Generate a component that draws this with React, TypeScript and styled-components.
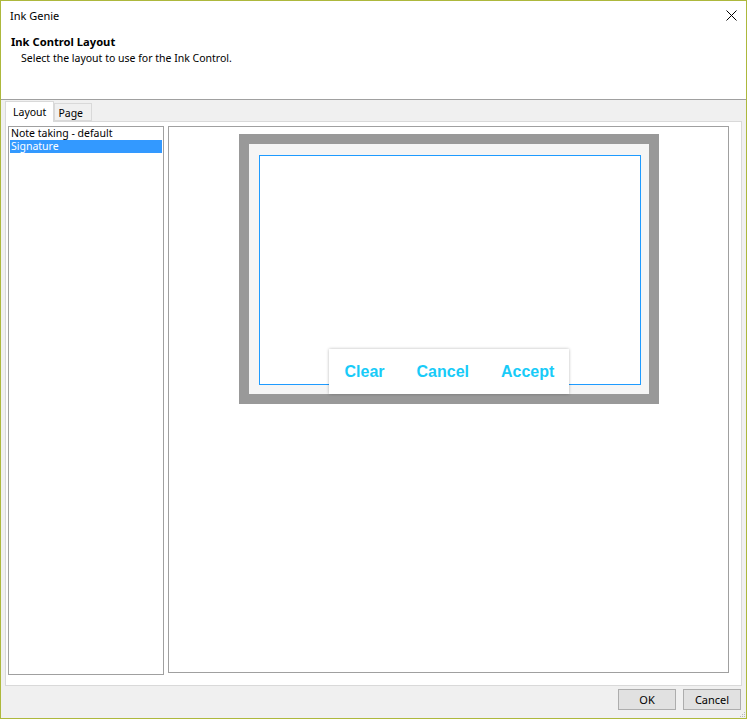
import styled, { createGlobalStyle } from 'styled-components'

const GlobalStyle = createGlobalStyle`
  html, body {
    margin: 0;
    padding: 0;
    background: #ffffff;
  }
  body {
    font-family: "Noto Sans", "Open Sans", sans-serif;
    font-size: 10.5px;
    color: #000000;
  }
`

const layouts = ['Note taking - default', 'Signature']
const selectedLayout = 1

const actions = ['Clear', 'Cancel', 'Accept']

const Window = styled.div`
  position: relative;
  width: 747px;
  height: 719px;
  box-sizing: border-box;
  border: 1px solid #adb83c;
  display: flex;
  flex-direction: column;
  background: #f0f0f0;
`

const TitleBar = styled.div`
  height: 29px;
  display: flex;
  align-items: center;
  justify-content: space-between;
  padding: 0 9px 0 9px;
  background: #ffffff;
  font-size: 11px;
`

const CloseGlyph = styled.svg`
  display: block;
`

const Header = styled.div`
  height: 70px;
  box-sizing: border-box;
  padding: 4px 10px 0;
  background: #ffffff;
  border-bottom: 1px solid #a0a0a0;
`

const HeaderTitle = styled.div`
  font-weight: 700;
  font-size: 11.2px;
  line-height: 16px;
`

const HeaderText = styled.div`
  line-height: 16px;
  padding-left: 10px;
`

const Body = styled.div`
  flex: 1;
  display: flex;
  flex-direction: column;
  padding: 1px 4px 0 4px;
`

const TabStrip = styled.div`
  display: flex;
  align-items: flex-end;
  height: 20px;
  position: relative;
  z-index: 1;
`

const Tab = styled.div<{ $active?: boolean }>`
  box-sizing: border-box;
  height: ${(p) => (p.$active ? '21px' : '18px')};
  margin-bottom: ${(p) => (p.$active ? '-1px' : '0')};
  padding: ${(p) => (p.$active ? '3px 7px 0 7px' : '2px 8px 0 3px')};
  border: 1px solid #d9d9d9;
  border-bottom: ${(p) => (p.$active ? 'none' : '1px solid #d9d9d9')};
  background: ${(p) => (p.$active ? '#ffffff' : '#f0f0f0')};
  line-height: 14px;
`

const TabPanel = styled.div`
  height: 565px;
  box-sizing: border-box;
  border: 1px solid #d9d9d9;
  background: #ffffff;
  display: grid;
  grid-template-columns: 156px 561px;
  column-gap: 4px;
  align-items: start;
  padding: 4px 0 0 2px;
`

const LayoutList = styled.div`
  height: 549px;
  box-sizing: border-box;
  border: 1px solid #a0a0a0;
  padding: 0 1px;
`

const LayoutItem = styled.div<{ $selected?: boolean }>`
  height: 13px;
  line-height: 13px;
  padding-left: 1px;
  white-space: nowrap;
  background: ${(p) => (p.$selected ? '#3399ff' : 'transparent')};
  color: ${(p) => (p.$selected ? '#ffffff' : '#000000')};
`

const Preview = styled.div`
  height: 547px;
  box-sizing: border-box;
  border: 1px solid #a0a0a0;
  display: flex;
  flex-direction: column;
  align-items: center;
  padding-top: 7px;
`

const Frame = styled.div`
  width: 420px;
  height: 270px;
  box-sizing: border-box;
  border: 10px solid #999999;
  background: #f5f5f5;
  position: relative;
  padding: 11px 8px 9px 10px;
`

const InkArea = styled.div`
  height: 100%;
  box-sizing: border-box;
  border: 1px solid #1e9bff;
  background: #ffffff;
`

const ActionBar = styled.div`
  position: absolute;
  left: 80px;
  bottom: 0;
  width: 240px;
  height: 45px;
  box-sizing: border-box;
  background: #ffffff;
  box-shadow: 0 0 3px rgba(0, 0, 0, 0.28);
  display: flex;
  align-items: center;
  gap: 32px;
  padding: 0 14px 0 16px;
  font-family: "Liberation Sans", Arial, sans-serif;
  font-weight: 700;
  font-size: 16px;
  color: #18cbf8;
`

const Footer = styled.div`
  display: flex;
  justify-content: flex-end;
  gap: 7px;
  padding: 3px 1px 0 0;
`

const Button = styled.div`
  width: 58px;
  height: 21px;
  box-sizing: border-box;
  border: 1px solid #adadad;
  background: #e1e1e1;
  display: flex;
  align-items: center;
  justify-content: center;
  font-size: 11px;
`

const Grip = styled.svg`
  position: absolute;
  right: 0;
  bottom: 0;
`

export default function App() {
  return (
    <>
      <GlobalStyle />
      <Window>
        <TitleBar>
          <span>Ink Genie</span>
          <CloseGlyph width="11" height="11" viewBox="0 0 11 11">
            <path d="M0.5 0.5 L10.5 10.5 M10.5 0.5 L0.5 10.5" stroke="#000" strokeWidth="1" />
          </CloseGlyph>
        </TitleBar>
        <Header>
          <HeaderTitle>Ink Control Layout</HeaderTitle>
          <HeaderText>Select the layout to use for the Ink Control.</HeaderText>
        </Header>
        <Body>
          <TabStrip>
            <Tab $active>Layout</Tab>
            <Tab>Page</Tab>
          </TabStrip>
          <TabPanel>
            <LayoutList>
              {layouts.map((name, i) => (
                <LayoutItem key={name} $selected={i === selectedLayout}>
                  {name}
                </LayoutItem>
              ))}
            </LayoutList>
            <Preview>
              <Frame>
                <InkArea />
                <ActionBar>
                  {actions.map((a) => (
                    <span key={a}>{a}</span>
                  ))}
                </ActionBar>
              </Frame>
            </Preview>
          </TabPanel>
          <Footer>
            <Button>OK</Button>
            <Button>Cancel</Button>
          </Footer>
        </Body>
        <Grip width="6" height="6" viewBox="0 0 6 6">
          <rect x="4" y="0" width="1" height="1" fill="#b8b8b8" />
          <rect x="2" y="2" width="1" height="1" fill="#b8b8b8" />
          <rect x="4" y="2" width="1" height="1" fill="#b8b8b8" />
          <rect x="0" y="4" width="1" height="1" fill="#b8b8b8" />
          <rect x="2" y="4" width="1" height="1" fill="#b8b8b8" />
          <rect x="4" y="4" width="1" height="1" fill="#b8b8b8" />
        </Grip>
      </Window>
    </>
  )
}
